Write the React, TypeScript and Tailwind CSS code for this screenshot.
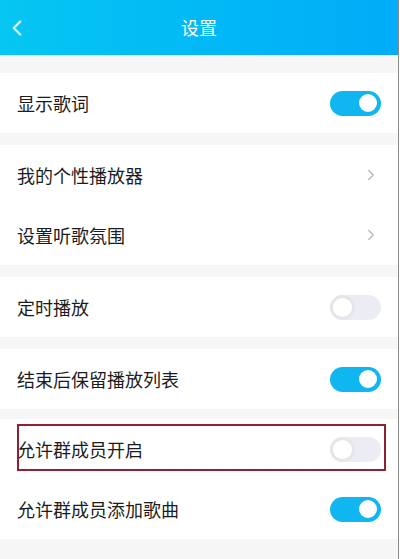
import { ChevronLeft, ChevronRight } from "lucide-react";

type Row =
  | { label: string; kind: "toggle"; on: boolean; marked?: boolean }
  | { label: string; kind: "link" };

const groups: Array<{ rows: Row[]; gapAfter: string }> = [
  { rows: [{ label: "显示歌词", kind: "toggle", on: true }], gapAfter: "h-[12px]" },
  {
    rows: [
      { label: "我的个性播放器", kind: "link" },
      { label: "设置听歌氛围", kind: "link" },
    ],
    gapAfter: "h-[12px]",
  },
  { rows: [{ label: "定时播放", kind: "toggle", on: false }], gapAfter: "h-[12px]" },
  { rows: [{ label: "结束后保留播放列表", kind: "toggle", on: true }], gapAfter: "h-[10px]" },
  {
    rows: [
      { label: "允许群成员开启", kind: "toggle", on: false, marked: true },
      { label: "允许群成员添加歌曲", kind: "toggle", on: true },
    ],
    gapAfter: "h-[20px]",
  },
];

function Toggle({ on }: { on: boolean }) {
  if (on) {
    return (
      <div className="w-[51px] h-[25px] rounded-full bg-[#0fb6f0] flex items-center justify-end pr-[4px]">
        <div className="w-[18px] h-[18px] rounded-full bg-white" />
      </div>
    );
  }
  return (
    <div className="w-[51px] h-[25px] rounded-full bg-[#ececf4] flex items-center">
      <div className="w-[25px] h-[25px] rounded-full bg-white border-[3px] border-[#e6e6ea]" />
    </div>
  );
}

export default function App() {
  return (
    <div
      className="w-[400px] h-[559px] overflow-hidden bg-white flex"
      style={{ fontFamily: '"Noto Sans CJK SC", "Noto Sans", sans-serif' }}
    >
      <div className="w-[398px] flex flex-col bg-[#f6f6f6]">
        <div className="h-[55px] shrink-0 relative flex items-center justify-center bg-gradient-to-r from-[#06c6f2] to-[#03acf8]">
          <ChevronLeft className="absolute left-[4px] top-[15px] text-[#d8f4fc]" size={26} strokeWidth={2.2} />
          <span className="text-white text-[18px]">设置</span>
        </div>
        <div className="h-[18px] shrink-0" />
        {groups.map((g, gi) => (
          <div key={gi}>
            <div className="bg-white">
              {g.rows.map((r) => (
                <div key={r.label} className="relative h-[60px] flex items-center justify-between pl-[17px] pr-[17px]">
                  <span className="text-[18px] text-[#1c1c1c]">{r.label}</span>
                  {r.kind === "toggle" ? (
                    <Toggle on={r.on} />
                  ) : (
                    <ChevronRight className="text-[#b8b8b8] mr-[1px]" size={18} strokeWidth={1.8} />
                  )}
                  {r.kind === "toggle" && r.marked && (
                    <div className="absolute left-[17px] right-[12px] top-[5px] bottom-[8px] border-2 border-[#8e2232]" />
                  )}
                </div>
              ))}
            </div>
            <div className={g.gapAfter} />
          </div>
        ))}
      </div>
      <div className="w-[1px] bg-[#8a8a8a]" />
    </div>
  );
}
